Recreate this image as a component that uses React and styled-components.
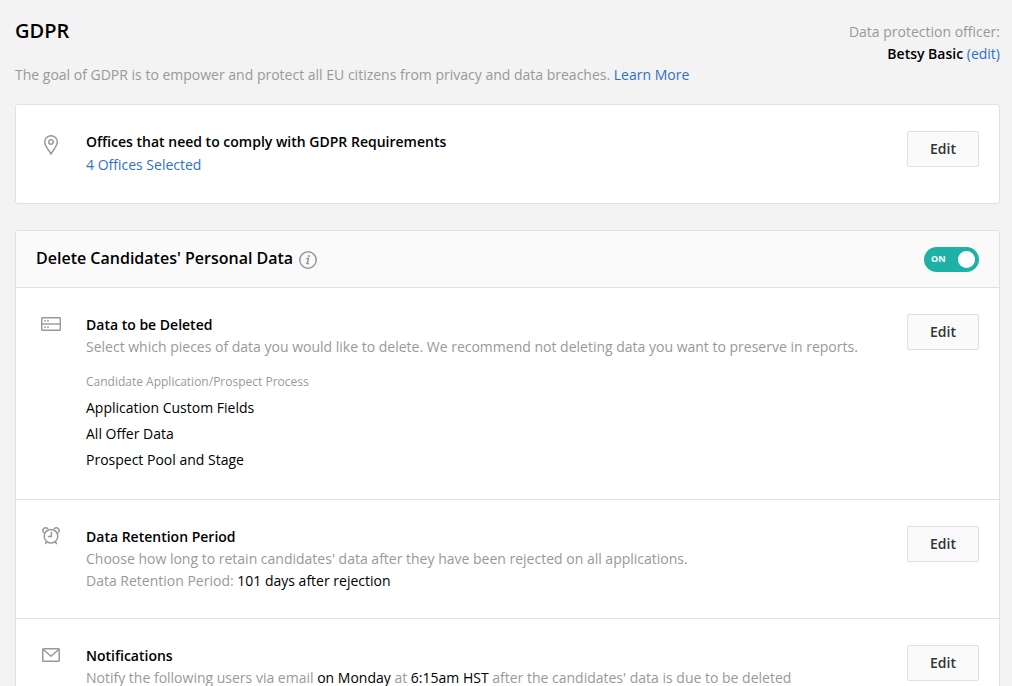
import React, { useState } from "react";
import styled, { createGlobalStyle } from "styled-components";

const colors = {
  page: "#f3f3f3",
  card: "#ffffff",
  soft: "#fafafa",
  border: "#e1e1e1",
  text: "#000000",
  muted: "#999999",
  link: "#2f6fc9",
  accent: "#1eb2a6",
};

const GlobalStyle = createGlobalStyle`
  * { box-sizing: border-box; }
  body {
    margin: 0;
    background: ${colors.page};
    color: ${colors.text};
    font: 400 14px/22px "Open Sans", "Noto Sans", sans-serif;
  }
  h1, h2, h3, h4, p, ul { margin: 0; padding: 0; }
`;

const Page = styled.main`
  padding: 16px 12px 26px 15px;
`;

const PageHeader = styled.header`
  display: flex;
  justify-content: space-between;
  margin-bottom: 18px;
`;

const PageTitle = styled.h1`
  font-size: 20px;
  line-height: 30px;
  font-weight: 600;
  margin-bottom: 18px;
`;

const Muted = styled.p`
  color: ${colors.muted};
`;

const Strong = styled.span`
  color: ${colors.text};
  font-weight: ${(p) => (p.$bold ? 600 : 400)};
`;

const Link = styled.a`
  color: ${colors.link};
  text-decoration: none;
`;

const Officer = styled.div`
  padding-top: 5px;
  text-align: right;
`;

const Card = styled.section`
  background: ${colors.card};
  border: 1px solid ${colors.border};
  border-radius: 3px;
  overflow: hidden;
  margin-bottom: 26px;
`;

const CardHeader = styled.div`
  display: flex;
  align-items: center;
  justify-content: space-between;
  height: 56px;
  padding: 0 20px;
  background: ${colors.soft};
`;

const CardTitle = styled.div`
  display: flex;
  align-items: center;
  gap: 6px;
`;

const CardHeading = styled.h2`
  font-size: 16px;
  line-height: 22px;
  font-weight: 600;
  padding-bottom: 2px;
`;

const Row = styled.div`
  display: flex;
  align-items: flex-start;
  padding: 26px 20px;

  & + &,
  ${CardHeader} + & {
    border-top: 1px solid ${colors.border};
  }
`;

const IconCell = styled.div`
  flex: none;
  display: flex;
  justify-content: center;
  align-items: center;
  width: 30px;
  height: ${(p) => (p.$tall ? 28 : 20)}px;
  margin-right: 20px;
  color: ${colors.muted};
`;

const RowBody = styled.div`
  flex: 1;
  min-width: 0;
`;

const RowTitle = styled.h3`
  font-size: 14px;
  line-height: 22px;
  font-weight: 600;
`;

const Selection = styled.p`
  line-height: 24px;
`;

const GroupLabel = styled.h4`
  margin: 12px 0 1px;
  font-size: 12px;
  line-height: 24px;
  font-weight: 400;
  color: ${colors.muted};
`;

const FieldList = styled.ul`
  list-style: none;
  line-height: 26px;
`;

const EditButton = styled.button`
  flex: none;
  width: 72px;
  height: 36px;
  padding: 0;
  border: 1px solid ${colors.border};
  border-radius: 2px;
  background: ${colors.soft};
  color: #333333;
  font: inherit;
  font-weight: 600;
  cursor: pointer;
`;

const InfoButton = styled.button`
  display: flex;
  padding: 2px 0 0;
  border: 0;
  background: none;
  color: ${colors.muted};
  cursor: pointer;
`;

const Switch = styled.label`
  position: relative;
  display: flex;
  align-items: center;
  justify-content: space-between;
  flex-direction: ${(p) => (p.$on ? "row" : "row-reverse")};
  width: 55px;
  height: 25px;
  padding: 0 4px 0 7px;
  border-radius: 13px;
  background: ${(p) => (p.$on ? colors.accent : colors.muted)};
  color: #ffffff;
  font-size: 9px;
  line-height: 12px;
  font-weight: 700;
  cursor: pointer;
`;

const SwitchInput = styled.input`
  position: absolute;
  inset: 0;
  width: 100%;
  height: 100%;
  margin: 0;
  opacity: 0;
  cursor: pointer;
`;

const Knob = styled.span`
  width: 17px;
  height: 17px;
  border-radius: 50%;
  background: #ffffff;
`;

const PinIcon = () => (
  <svg width="20" height="20" viewBox="0 0 20 20" fill="none" stroke="currentColor" strokeWidth="1.5" aria-hidden="true">
    <path d="M10 19C8.600 16 3.700 11.200 3.700 7A6.300 6.300 0 0 1 16.300 7C16.300 11.200 11.400 16 10 19Z" />
    <circle cx="10" cy="7" r="2.200" />
  </svg>
);

const ServerIcon = () => (
  <svg width="20" height="14" viewBox="0 0 20 14" fill="none" stroke="currentColor" strokeWidth="1.400" aria-hidden="true">
    <rect x="0.700" y="0.700" width="18.600" height="12.600" rx="0.600" />
    <path d="M0.700 7H19.300" />
    <path d="M3.200 3.800H4.800M6.200 3.800H7.800M3.200 10.200H4.800M6.200 10.200H7.800" strokeWidth="1.600" />
  </svg>
);

const AlarmIcon = () => (
  <svg width="18" height="18" viewBox="0 0 18 18" fill="none" stroke="currentColor" strokeWidth="1.500" strokeLinecap="round" aria-hidden="true">
    <circle cx="9" cy="9.200" r="6.800" />
    <path d="M1.600 5.400A2.500 2.500 0 1 1 5.700 1.700M12.300 1.700A2.500 2.500 0 1 1 16.400 5.400" />
    <path d="M9.400 5.200V9.500H6.400M4.600 14.800L3.600 16.600M13.400 14.800L14.400 16.600" />
  </svg>
);

const MailIcon = () => (
  <svg width="18" height="14" viewBox="0 0 18 14" fill="none" stroke="currentColor" strokeWidth="1.500" strokeLinejoin="round" aria-hidden="true">
    <rect x="0.750" y="0.750" width="16.500" height="12.500" rx="0.800" />
    <path d="M1 1.200L9 8.300L17 1.200" />
  </svg>
);

const InfoIcon = () => (
  <svg width="18" height="18" viewBox="0 0 18 18" fill="none" stroke="currentColor" aria-hidden="true">
    <circle cx="9" cy="9" r="8.200" strokeWidth="1.500" />
    <path d="M7.400 7.500H9.500L8.300 12.400H9.900M6.900 12.400H8.300" strokeWidth="1.500" />
    <circle cx="9.900" cy="5" r="1.100" fill="currentColor" stroke="none" />
  </svg>
);

function SettingRow({ icon, tallIcon, title, children }) {
  return (
    <Row>
      <IconCell $tall={tallIcon}>{icon}</IconCell>
      <RowBody>
        <RowTitle>{title}</RowTitle>
        {children}
      </RowBody>
      <EditButton type="button" aria-label={`Edit: ${title}`}>Edit</EditButton>
    </Row>
  );
}

const deletedFields = ["Application Custom Fields", "All Offer Data", "Prospect Pool and Stage"];

export default function App() {
  const [on, setOn] = useState(true);

  return (
    <>
      <GlobalStyle />
      <Page>
        <PageHeader>
          <div>
            <PageTitle>GDPR</PageTitle>
            <Muted>
              The goal of GDPR is to empower and protect all EU citizens from privacy and data breaches.{" "}
              <Link href="#learn">Learn More</Link>
            </Muted>
          </div>
          <Officer>
            <Muted>Data protection officer:</Muted>
            <p>
              <Strong $bold>Betsy Basic</Strong> <Link href="#officer">(edit)</Link>
            </p>
          </Officer>
        </PageHeader>

        <Card>
          <SettingRow icon={<PinIcon />} tallIcon title="Offices that need to comply with GDPR Requirements">
            <Selection>
              <Link href="#offices">4 Offices Selected</Link>
            </Selection>
          </SettingRow>
        </Card>

        <Card>
          <CardHeader>
            <CardTitle>
              <CardHeading id="delete-heading">Delete Candidates' Personal Data</CardHeading>
              <InfoButton type="button" aria-label="More information">
                <InfoIcon />
              </InfoButton>
            </CardTitle>
            <Switch $on={on}>
              <SwitchInput
                type="checkbox"
                role="switch"
                aria-labelledby="delete-heading"
                checked={on}
                onChange={(e) => setOn(e.target.checked)}
              />
              <span>{on ? "ON" : "OFF"}</span>
              <Knob />
            </Switch>
          </CardHeader>

          <SettingRow icon={<ServerIcon />} title="Data to be Deleted">
            <Muted>
              Select which pieces of data you would like to delete. We recommend not deleting data you want to preserve
              in reports.
            </Muted>
            <GroupLabel>Candidate Application/Prospect Process</GroupLabel>
            <FieldList>
              {deletedFields.map((field) => (
                <li key={field}>{field}</li>
              ))}
            </FieldList>
          </SettingRow>

          <SettingRow icon={<AlarmIcon />} title="Data Retention Period">
            <Muted>Choose how long to retain candidates' data after they have been rejected on all applications.</Muted>
            <Muted>
              Data Retention Period: <Strong>101 days after rejection</Strong>
            </Muted>
          </SettingRow>

          <SettingRow icon={<MailIcon />} title="Notifications">
            <Muted>
              Notify the following users via email <Strong>on Monday</Strong> at <Strong>6:15am HST</Strong> after the
              candidates' data is due to be deleted
            </Muted>
          </SettingRow>
        </Card>
      </Page>
    </>
  );
}
